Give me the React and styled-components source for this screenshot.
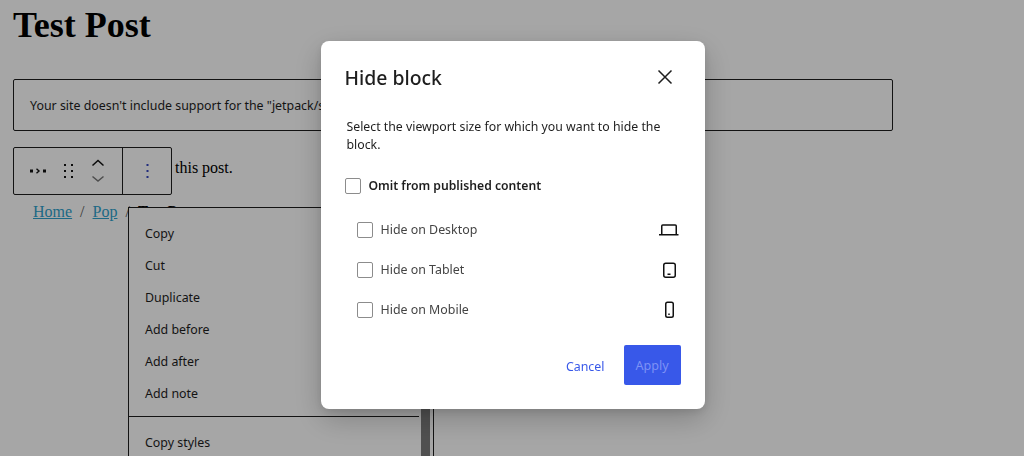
import React from "react";
import styled, { createGlobalStyle } from "styled-components";

const Global = createGlobalStyle`
  html, body { margin: 0; padding: 0; background: #fff; overflow: hidden; }
  body { font-family: "Liberation Serif", serif; color: #000; }
  * { box-sizing: border-box; }
`;
const Page = styled.div`
  width: 1024px; height: 456px; padding-left: 13px; overflow: hidden; position: relative;
`;
const Title = styled.h1`
  margin: 0; height: 79px; padding-top: 5px; font-size: 36px; line-height: 41px; font-weight: 700;
`;
const Notice = styled.div`
  width: 880px; height: 52px; border: 1px solid #1e1e1e; border-radius: 2px; padding: 1px 16px 0;
  display: flex; align-items: center;
  font: 12.4px/18px "Noto Sans", sans-serif; color: #1e1e1e;
`;
const ToolRow = styled.div`
  display: flex; margin-top: 16px; align-items: flex-start;
`;
const Toolbar = styled.div`
  display: flex; width: 159px; height: 48px; border: 1px solid #1e1e1e; border-radius: 2px;
`;
const ToolGroup = styled.div`
  display: flex; align-items: center; width: ${p => p.$w}px; padding-left: ${p => p.$pad}px;
  & + & { border-left: 1px solid #1e1e1e; }
`;
const Para = styled.span`
  font-size: 16px; line-height: 18px; margin: 12px 0 0 3px;
`;
const Crumbs = styled.nav`
  margin: 8px 0 0 20px; font-size: 16px; line-height: 18px; color: #555; display: flex; gap: 8px;
`;
const Crumb = styled.a`
  color: #2ea2cc; text-decoration: underline;
`;
const Current = styled.b`
  font-size: 15px; line-height: 18px; color: #000; margin-top: -1px;
`;
const Menu = styled.div`
  position: absolute; left: 128px; top: 207px; width: 306px; height: 300px; background: #fff;
  border: 1px solid #1e1e1e; padding-top: 10px; font: 12.4px/32px "Noto Sans", sans-serif; color: #1e1e1e;
`;
const MenuItem = styled.div`
  height: 32px; padding-left: 16px;
`;
const MenuSep = styled.hr`
  width: 290px; height: 1px; margin: 6px 0 10px; border: 0; background: #1e1e1e;
`;
const MenuScroll = styled.div`
  position: absolute; right: 3px; top: 200px; width: 9px; height: 100px; background: #7c7c7c;
`;
const Scrim = styled.div`
  position: fixed; inset: 0; background: rgba(0,0,0,.35); display: flex; justify-content: center;
  align-items: flex-start; padding: 41px 0 0 1px;
`;
const Dialog = styled.div`
  width: 384px; height: 368px; background: #fff; border-radius: 8px; padding: 0 24px;
  box-shadow: 0 10px 30px rgba(0,0,0,.22), 0 3px 9px rgba(0,0,0,.1);
  font-family: "Noto Sans", sans-serif; color: #1e1e1e;
`;
const Header = styled.header`
  display: flex; justify-content: space-between; align-items: center; height: 74px;
`;
const Heading = styled.h2`
  margin: 0; font-size: 19.4px; line-height: 28px; font-weight: 500;
`;
const Close = styled.button`
  all: unset; display: flex; margin-right: 4px; position: relative; top: -1px;
`;
const Desc = styled.p`
  margin: 3px 0 0 2px; font-size: 12.3px; line-height: 18px; width: 330px;
`;
const CheckRow = styled.label`
  display: flex; align-items: center; gap: 8px; height: 16px;
  font-size: ${p => (p.$strong ? 12.2 : 12.4)}px; line-height: 16px; font-weight: ${p => (p.$strong ? 600 : 400)};
  color: ${p => (p.$strong ? "#1e1e1e" : "#444")};
`;
const OmitWrap = styled.div`
  margin-top: 24px;
`;
const Box = styled.span`
  width: 16px; height: 16px; border: 1px solid #8c8c8c; border-radius: 2px; background: #fff; flex: none;
`;
const Devices = styled.div`
  display: flex; flex-direction: column; gap: 24px; margin: 28px 0 0 12px;
`;
const DeviceRow = styled.div`
  display: flex; justify-content: space-between; align-items: center; height: 16px;
`;
const DeviceIcon = styled.svg`
  width: 24px; height: 24px; flex: none; fill: none; stroke: #111; stroke-width: 1.5;
`;
const Actions = styled.div`
  display: flex; justify-content: flex-end; align-items: center; gap: 19px; margin-top: 27px;
`;
const Cancel = styled.button`
  all: unset; font-size: 12.4px; line-height: 18px; color: #3858e9; position: relative; top: 2px;
`;
const Apply = styled.button`
  all: unset; width: 57px; height: 40px; border-radius: 2px; background: #3858e9; color: #7d92f5;
  font-size: 12.6px; padding-top: 1px; display: flex; align-items: center; justify-content: center;
  box-sizing: border-box;
`;
const Glyph = styled.svg`
  display: block; flex: none; margin-left: ${p => p.$gap || 0}px;
`;

const rows = [
  ["Hide on Desktop", <path key="d" d="M4.75 16V8a1 1 0 0 1 1-1h12.5a1 1 0 0 1 1 1v8M2 16.75h19.5" />],
  ["Hide on Tablet", <><rect x="6.75" y="5.25" width="11.5" height="14" rx="2" /><path d="M10.5 16.25h3" /></>],
  ["Hide on Mobile", <><rect x="8.75" y="4.25" width="7.5" height="15" rx="1.75" /><path d="M12 17v-1.4" /></>],
];
const items = ["Copy", "Cut", "Duplicate", "Add before", "Add after", "Add note"];

export default function App() {
  return (
    <Page>
      <Global />
      <Title>Test Post</Title>
      <Notice>Your site doesn't include support for the "jetpack/subscriptions" block.</Notice>
      <ToolRow>
        <Toolbar>
          <ToolGroup $w={108} $pad={16}>
            <Glyph width="18" height="8" viewBox="0 0 18 8">
              <rect x="0" y="2.5" width="3" height="3" fill="#111" />
              <path d="M6.5 1.8 9 4 6.5 6.2" stroke="#111" strokeWidth="1.4" fill="none" />
              <rect x="13" y="2.5" width="3" height="3" fill="#111" />
            </Glyph>
            <Glyph $gap={15} width="12" height="16" viewBox="0 0 12 16" fill="#111">
              <rect x="1" y="1" width="2" height="2" /><rect x="8" y="1" width="2" height="2" />
              <rect x="1" y="7" width="2" height="2" /><rect x="8" y="7" width="2" height="2" />
              <rect x="1" y="13" width="2" height="2" /><rect x="8" y="13" width="2" height="2" />
            </Glyph>
            <Glyph $gap={16} width="14" height="26" viewBox="0 0 14 26" fill="none" strokeWidth="1.5">
              <path d="M1.5 7.5 7 2.5l5.5 5" stroke="#111" />
              <path d="M1.5 18.5 7 23l5.5-4.5" stroke="#777" />
            </Glyph>
          </ToolGroup>
          <ToolGroup $w={49} $pad={23}>
            <Glyph width="3" height="16" viewBox="0 0 3 16" fill="#3545c0">
              <rect width="2" height="2" x=".5" y="1" /><rect width="2" height="2" x=".5" y="7" /><rect width="2" height="2" x=".5" y="13" />
            </Glyph>
          </ToolGroup>
        </Toolbar>
        <Para>this post.</Para>
      </ToolRow>
      <Crumbs>
        <Crumb>Home</Crumb><span>/</span><Crumb>Pop</Crumb><span>/</span><Current>Test Post</Current>
      </Crumbs>
      <Menu>
        {items.map(i => <MenuItem key={i}>{i}</MenuItem>)}
        <MenuSep />
        <MenuItem>Copy styles</MenuItem>
        <MenuScroll />
      </Menu>
      <Scrim>
        <Dialog role="dialog">
          <Header>
            <Heading>Hide block</Heading>
            <Close aria-label="Close">
              <Glyph width="24" height="24" viewBox="0 0 24 24" fill="none" stroke="#1e1e1e" strokeWidth="1.5">
                <path d="M5.5 5.5l13 13M18.5 5.5l-13 13" />
              </Glyph>
            </Close>
          </Header>
          <Desc>Select the viewport size for which you want to hide the block.</Desc>
          <OmitWrap>
            <CheckRow $strong><Box />Omit from published content</CheckRow>
          </OmitWrap>
          <Devices>
            {rows.map(([label, icon]) => (
              <DeviceRow key={label}>
                <CheckRow><Box />{label}</CheckRow>
                <DeviceIcon viewBox="0 0 24 24">{icon}</DeviceIcon>
              </DeviceRow>
            ))}
          </Devices>
          <Actions>
            <Cancel>Cancel</Cancel>
            <Apply>Apply</Apply>
          </Actions>
        </Dialog>
      </Scrim>
    </Page>
  );
}
